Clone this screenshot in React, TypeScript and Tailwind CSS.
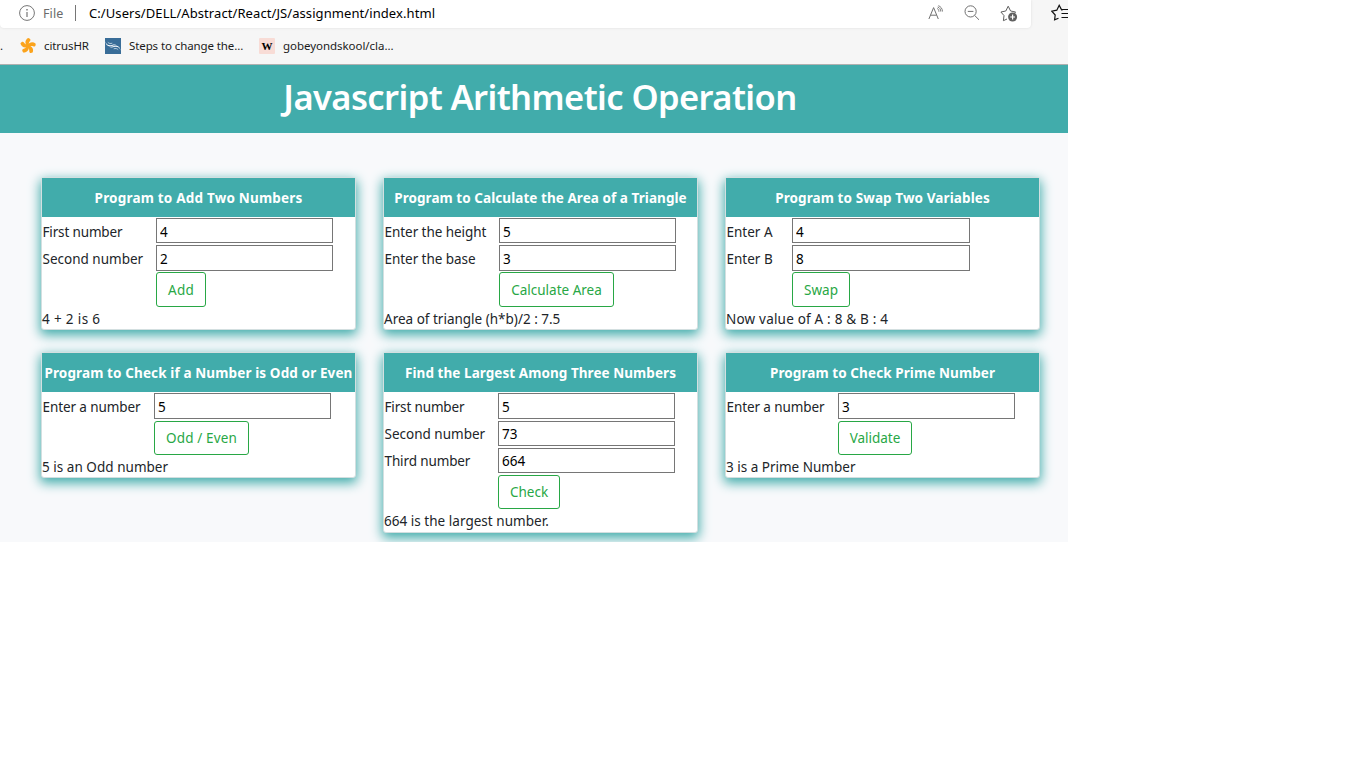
type Field = { label: string; value: string; box: string; labelClass: string };

type Program = {
  title: string;
  titleClass: string;
  labelCol: string;
  fields: Field[];
  action: string;
  actionClass: string;
  result: string;
  resultClass: string;
};

const programs: Program[] = [
  {
    title: 'Program to Add Two Numbers',
    titleClass: 'tracking-[0.2px]',
    labelCol: 'w-[114px]',
    fields: [
      { label: 'First number', value: '4', box: 'h-[25px] w-[177px] pt-[3px]', labelClass: 'pt-[3px] tracking-[-0.15px]' },
      { label: 'Second number', value: '2', box: 'h-[26px] w-[177px] pt-[2px]', labelClass: 'pt-[2px] tracking-[0px]' },
    ],
    action: 'Add',
    actionClass: 'mt-px h-[35px] w-[50px] pt-[2px] tracking-[0.2px]',
    result: '4 + 2 is 6',
    resultClass: 'tracking-[0.35px]',
  },
  {
    title: 'Program to Calculate the Area of a Triangle',
    titleClass: 'tracking-[0.06px]',
    labelCol: 'w-[115px]',
    fields: [
      { label: 'Enter the height', value: '5', box: 'h-[25px] w-[177px] pt-[3px]', labelClass: 'pt-[3px] tracking-[-0.05px]' },
      { label: 'Enter the base', value: '3', box: 'h-[26px] w-[177px] pt-[2px]', labelClass: 'pt-[2px] tracking-[-0.05px]' },
    ],
    action: 'Calculate Area',
    actionClass: 'mt-px h-[35px] w-[115px] pt-[2px]',
    result: 'Area of triangle (h*b)/2 : 7.5',
    resultClass: 'tracking-[0px]',
  },
  {
    title: 'Program to Swap Two Variables',
    titleClass: 'tracking-[0.1px]',
    labelCol: 'w-[66px]',
    fields: [
      { label: 'Enter A', value: '4', box: 'h-[25px] w-[178px] pt-[3px]', labelClass: 'pt-[3px] tracking-[0px]' },
      { label: 'Enter B', value: '8', box: 'h-[26px] w-[178px] pt-[2px]', labelClass: 'pt-[2px] tracking-[0px]' },
    ],
    action: 'Swap',
    actionClass: 'mt-px h-[35px] w-[58px] pt-[2px]',
    result: 'Now value of A : 8 & B : 4',
    resultClass: 'tracking-[0.2px]',
  },
  {
    title: 'Program to Check if a Number is Odd or Even',
    titleClass: 'tracking-[0.12px]',
    labelCol: 'w-[112px]',
    fields: [{ label: 'Enter a number', value: '5', box: 'h-[26px] w-[177px] pt-[2px]', labelClass: 'pt-[2px] tracking-[-0.1px]' }],
    action: 'Odd / Even',
    actionClass: 'mt-[2px] h-[34px] w-[95px] tracking-[0.15px]',
    result: '5 is an Odd number',
    resultClass: 'tracking-[0.03px]',
  },
  {
    title: 'Find the Largest Among Three Numbers',
    titleClass: 'tracking-[0.06px]',
    labelCol: 'w-[114px]',
    fields: [
      { label: 'First number', value: '5', box: 'h-[26px] w-[177px] pt-[2px]', labelClass: 'pt-[2px] tracking-[-0.15px]' },
      { label: 'Second number', value: '73', box: 'h-[25px] w-[177px] pt-px', labelClass: 'pt-px tracking-[0px]' },
      { label: 'Third number', value: '664', box: 'h-[25px] w-[177px] pt-px', labelClass: 'pt-px tracking-[-0.12px]' },
    ],
    action: 'Check',
    actionClass: 'mt-[2px] h-[34px] w-[62px]',
    result: '664 is the largest number.',
    resultClass: 'tracking-[0.03px]',
  },
  {
    title: 'Program to Check Prime Number',
    titleClass: 'tracking-[0.09px]',
    labelCol: 'w-[112px]',
    fields: [{ label: 'Enter a number', value: '3', box: 'h-[26px] w-[177px] pt-[2px]', labelClass: 'pt-[2px] tracking-[-0.1px]' }],
    action: 'Validate',
    actionClass: 'mt-[2px] h-[34px] w-[74px]',
    result: '3 is a Prime Number',
    resultClass: 'tracking-[0px]',
  },
];

function ProgramCard({ program }: { program: Program }) {
  return (
    <section className="w-[315px] rounded-[3px] border border-[#d3dfe0] bg-white text-[13.5px] text-[#212529] shadow-[0_4px_12px_1px_#41acab]">
      <h2 className="flex h-[39px] items-center justify-center whitespace-nowrap bg-[#41acab] pt-px text-[13.5px] font-bold text-white">
        <span className={program.titleClass}>{program.title}</span>
      </h2>
      <div className="flex flex-col gap-[2px] pt-px">
        {program.fields.map((field) => (
          <label key={field.label} className="flex items-center">
            <span className={`${program.labelCol} ${field.labelClass} flex-none whitespace-nowrap pl-[0.5px] leading-[20px]`}>
              {field.label}
            </span>
            <input
              defaultValue={field.value}
              className={`${field.box} border border-[#767676] bg-white px-[3px] text-[13.5px] text-black outline-none`}
            />
          </label>
        ))}
      </div>
      <div className="flex">
        <div className={`${program.labelCol} flex-none`} />
        <button
          className={`${program.actionClass} flex items-center justify-center whitespace-nowrap rounded-[3px] border border-[#28a745] text-[13.5px] text-[#28a745]`}
        >
          {program.action}
        </button>
      </div>
      <p className="h-[22px] whitespace-nowrap pt-[2px] leading-[20px]">
        <span className={program.resultClass}>{program.result}</span>
      </p>
      {program.fields.length > 2 && <div className="h-px" />}
    </section>
  );
}

function BrowserBar() {
  return (
    <div className="h-[65px] border-b border-[#b0b0b0] bg-[#f6f6f6] text-[11.5px] tracking-[-0.1px] text-[#1b1b1b]">
      <div className="flex h-[28px]">
        <div className="flex w-[1031px] items-center rounded-b-[4px] bg-white pl-[19px] shadow-[0_0_3px_rgba(0,0,0,0.1)]">
          <svg width="16" height="16" viewBox="0 0 16 16" className="mb-[2px]" fill="none" stroke="#767676">
            <circle cx="8" cy="8" r="7.4" />
            <path d="M8 7v5" strokeWidth="1.2" />
            <path d="M8 4v1.4" strokeWidth="1.4" />
          </svg>
          <span className="ml-[8px] w-[32px] text-[12.5px] tracking-[0.1px] text-[#6b6b6b]">File</span>
          <span className="mb-[2px] h-[16px] w-px bg-[#767676]" />
          <span className="ml-[13px] w-[839px] whitespace-nowrap text-[13px] tracking-[0.08px] text-black">
            C:/Users/DELL/Abstract/React/JS/assignment/index.html
          </span>
          <svg width="16" height="16" viewBox="0 0 16 16" className="mb-[2px]" fill="none" stroke="#707070">
            <path d="M.9 14 5.600 2.600 10.300 14M2.600 10.200h6" />
            <path d="M9.200 3.400c1.100.6 1.700 1.800 1.700 3.300M10.300.700c2.500.8 4 2.700 4.200 5.800M9.700 2c2 .7 3 2.300 3.100 4.600" strokeWidth=".9" />
          </svg>
          <svg width="16" height="16" viewBox="0 0 16 16" className="mb-[2px] ml-[20px]" fill="none" stroke="#707070">
            <circle cx="6.6" cy="6.4" r="5.600" />
            <path d="M3.800 6.400h5.600M10.700 10.500l4.300 4.300" />
          </svg>
          <svg width="18" height="17" viewBox="0 0 18 17" className="mb-px ml-[20px]" fill="none" stroke="#606060">
            <path d="M7 14 3.400 15.700 4 10.600.9 7 5.800 6 8.200 1.200l2.400 4.800 5 1-1.400 1.500" />
            <circle cx="12.6" cy="12" r="4.500" fill="#606060" stroke="none" />
            <path d="M12.6 9.600v4.800M10.200 12H15" stroke="#fff" strokeWidth="1.200" />
          </svg>
        </div>
        <svg width="17" height="18" viewBox="0 0 17 18" className="ml-[20px] mt-[4px]" fill="none" stroke="#111" strokeWidth="1.2">
          <path d="M7.500 14.200 3.600 15.900 4.200 11 .8 7.200 5.800 6.200 8.200 1.300l2.400 4.600h1" />
          <path d="M10.500 5.500H17M10.500 9.500H17M10.500 13.500H17" />
        </svg>
      </div>
      <div className="flex h-[36px] items-center whitespace-nowrap">
        <span className="w-[20px]">.</span>
        <svg width="16" height="16" viewBox="-8 -8 16 16" fill="#fba31c">
          {[12, 84, 156, 228, 300].map((angle) => (
            <path key={angle} d="M-.8.600C-4-2-4.200-5.500-1.500-7.900 1-7.700 1.600-6.500.8-5-.2-3.200.6-1.600.9.200Z" transform={`rotate(${angle})`} />
          ))}
        </svg>
        <span className="ml-[8px] w-[61px]">citrusHR</span>
        <svg width="16" height="16" viewBox="0 0 16 16" fill="none">
          <path d="M0 0h16v16H0z" fill="#396d98" />
          <path d="M.5 3.200C1 6.200 3.500 7.800 7 6.900c2.300-.6 4-.3 5 .7-1.600-.4-2.900-.3-4.400.2C3.600 9.200.5 7 .5 3.200Z" fill="#fff" />
          <path d="M15.500 12.800c-.5-3-3-4.600-6.500-3.700-2.300.6-4 .3-5-.7 1.600.4 2.900.3 4.400-.2 4-1.400 7.100.8 7.100 4.600Z" fill="#fff" />
          <path d="M2.800 4.300c1.200 1.200 2.700 1.500 4.500.9M13.200 11.700c-1.200-1.200-2.700-1.500-4.500-.9" stroke="#d6e1ea" strokeWidth=".8" />
        </svg>
        <span className="ml-[8px] w-[130px]">Steps to change the...</span>
        <span className="flex h-[16px] w-[16px] items-center justify-center rounded-[1px] bg-[#f8dcd6] font-['Liberation_Serif',serif] text-[11px] font-bold text-black">
          W
        </span>
        <span className="ml-[8px] tracking-[-0.04px]">gobeyondskool/cla...</span>
      </div>
    </div>
  );
}

export default function App() {
  return (
    <div className="min-h-screen bg-white font-['Noto_Sans',sans-serif]">
      <div className="h-[542px] w-[1068px] overflow-hidden bg-[#f8f9fb]">
        <BrowserBar />
        <header className="flex h-[68px] items-center justify-center bg-[#41acab] pb-[4px] pl-[12px]">
          <h1 className="whitespace-nowrap text-[34.5px] font-semibold leading-[44px] tracking-[-0.58px] text-white">
            Javascript Arithmetic Operation
          </h1>
        </header>
        <main className="grid grid-cols-[315px_315px_315px] items-start gap-x-[27px] gap-y-[22px] pl-[41px] pt-[44px]">
          {programs.map((program) => (
            <ProgramCard key={program.title} program={program} />
          ))}
        </main>
      </div>
    </div>
  );
}
